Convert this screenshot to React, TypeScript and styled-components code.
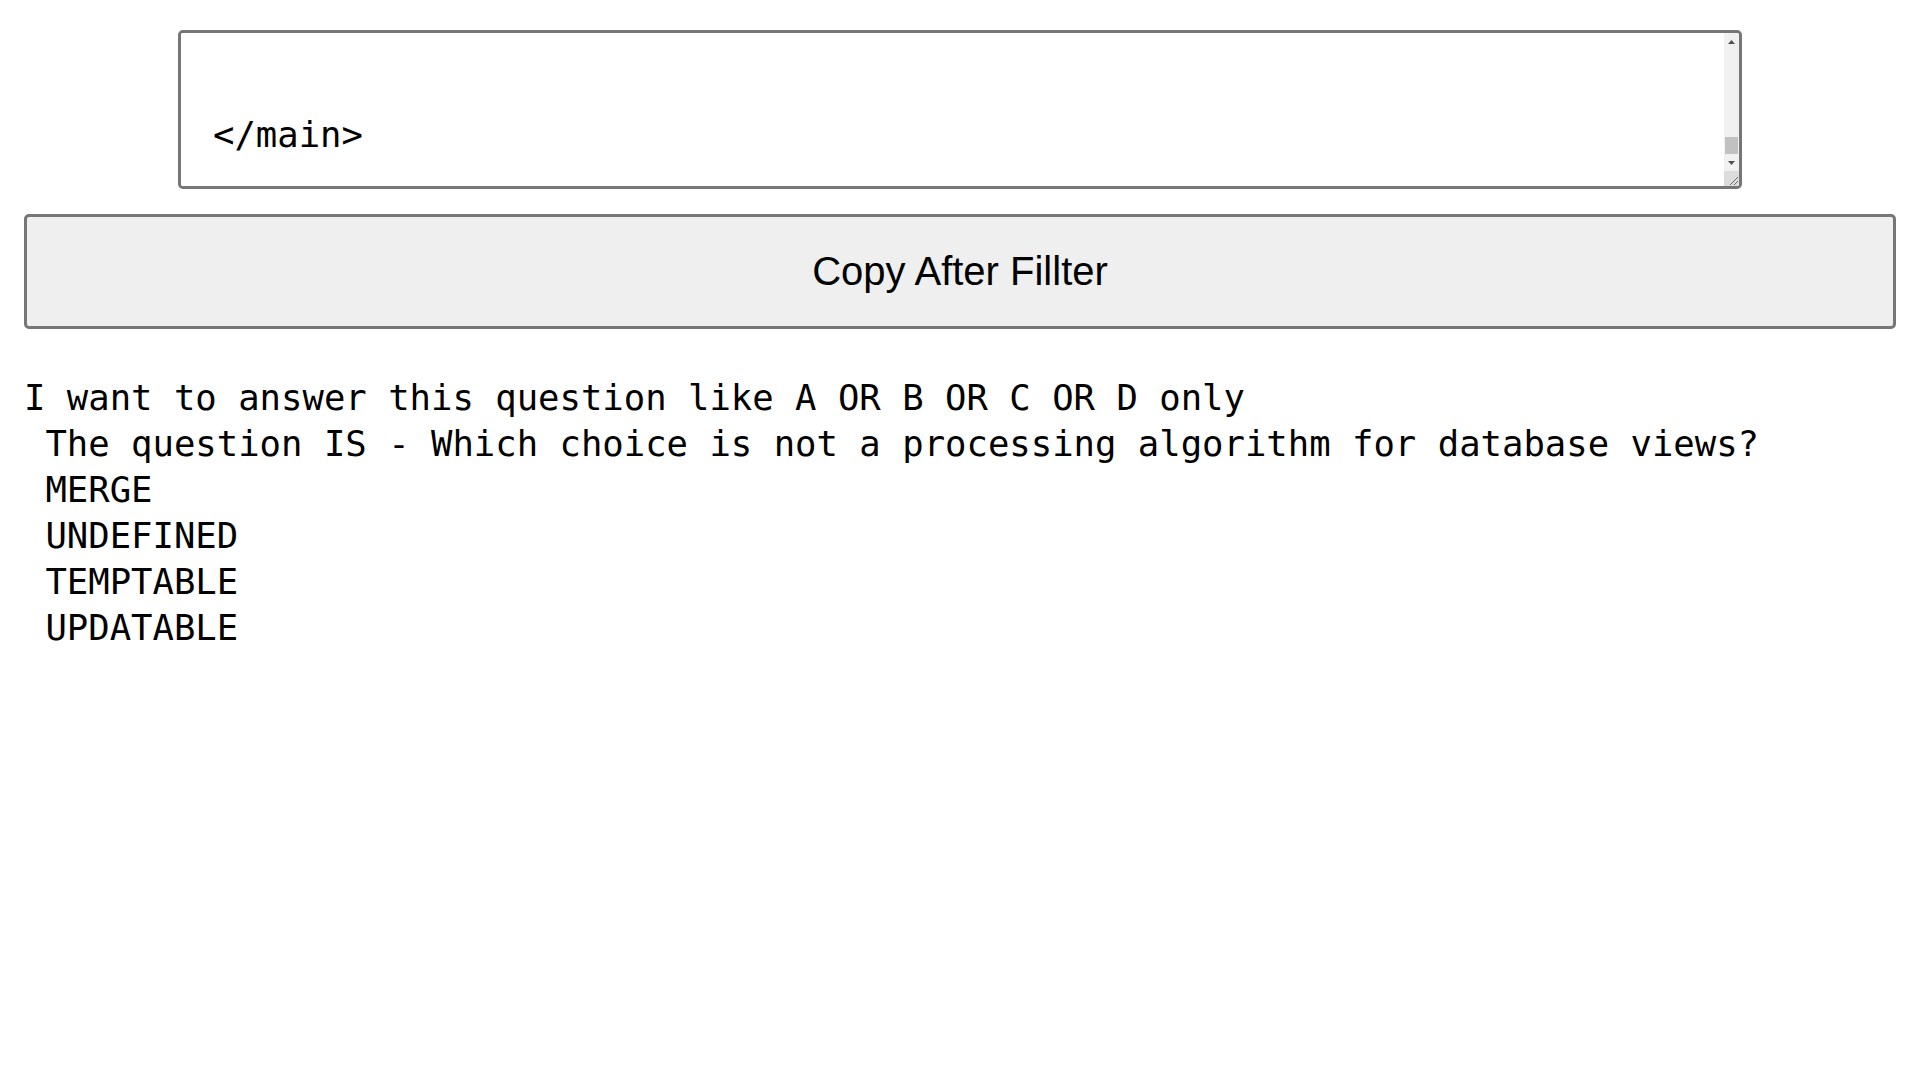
import React, { useEffect, useRef } from "react";
import styled, { createGlobalStyle } from "styled-components";

const Global = createGlobalStyle`
  html, body { margin: 0; padding: 0; background: #ffffff; }
  body { font-family: "Liberation Sans", Arial, sans-serif; }
`;

const Page = styled.div`
  display: flex;
  flex-direction: column;
  padding: 30px 24px 0 24px;
`;

const EditorFrame = styled.div`
  display: flex;
  box-sizing: border-box;
  width: 1564px;
  height: 159px;
  margin: 0 auto;
  border: 3px solid #767676;
  border-radius: 5px;
  background: #ffffff;
  overflow: hidden;
`;

const Editor = styled.textarea`
  flex: 1;
  min-width: 0;
  box-sizing: border-box;
  height: 100%;
  margin: 0;
  padding: 28px 30px 28px 32px;
  border: none;
  background: #ffffff;
  color: #000000;
  font-family: "DejaVu Sans Mono", monospace;
  font-size: 35.6px;
  line-height: 46px;
  resize: none;
  outline: none;
  overflow: hidden;
`;

const Rail = styled.div`
  display: flex;
  flex-direction: column;
  width: 15px;
  flex: 0 0 15px;
  background: #f1f1f1;
`;

const RailButton = styled.div`
  display: flex;
  align-items: center;
  justify-content: center;
  height: 17px;
  flex: 0 0 17px;
`;

const Track = styled.div`
  flex: 1;
  display: flex;
  flex-direction: column;
  justify-content: flex-end;
`;

const Thumb = styled.div`
  height: 17px;
  margin: 0 1px 0 1px;
  background: #c1c1c1;
`;

const Corner = styled.div`
  flex: 0 0 15px;
  height: 15px;
  background: #dcdcdc;
  display: flex;
  align-items: flex-end;
  justify-content: flex-end;
`;

const CopyButton = styled.button`
  display: block;
  box-sizing: border-box;
  width: 100%;
  height: 115px;
  margin-top: 25px;
  border: 3px solid #767676;
  border-radius: 5px;
  background: #efefef;
  color: #000000;
  font-family: "Liberation Sans", Arial, sans-serif;
  font-size: 40px;
  cursor: pointer;
`;

const Output = styled.div`
  margin-top: 46px;
  white-space: pre;
  font-family: "DejaVu Sans Mono", monospace;
  font-size: 35.6px;
  line-height: 46px;
  color: #000000;
`;

const source = [
  "<main>",
  "  <section class=\"question\">",
  "    <h2>Question</h2>",
  "    <p>Which choice is not a processing algorithm for database views?</p>",
  "    <ul>",
  "      <li>MERGE</li>",
  "      <li>UNDEFINED</li>",
  "      <li>TEMPTABLE</li>",
  "      <li>UPDATABLE</li>",
  "    </ul>",
  "  </section>",
  "  <section class=\"answer\">",
  "    <p></p>",
  "  </section>",
  "  <footer>",
  "  </footer>",
  "  <aside>",
  "  </aside>",
  "  <div>",
  "  </div>",
  "",
  "",
  "",
  "</main>",
].join("\n");

const lines = [
  "I want to answer this question like A OR B OR C OR D only",
  " The question IS - Which choice is not a processing algorithm for database views?",
  " MERGE",
  " UNDEFINED",
  " TEMPTABLE",
  " UPDATABLE",
];

const ArrowUp = () => (
  <svg width="7" height="4" viewBox="0 0 7 4">
    <polygon points="3.5,0 7,4 0,4" fill="#505050" />
  </svg>
);

const ArrowDown = () => (
  <svg width="7" height="4" viewBox="0 0 7 4">
    <polygon points="0,0 7,0 3.5,4" fill="#505050" />
  </svg>
);

const Grip = () => (
  <svg width="15" height="15" viewBox="0 0 15 15">
    <line x1="6" y1="14" x2="14" y2="6" stroke="#6b6b6b" strokeWidth="1" />
    <line x1="10" y1="14" x2="14" y2="10" stroke="#6b6b6b" strokeWidth="1" />
  </svg>
);

export default function App() {
  const ref = useRef<HTMLTextAreaElement>(null);
  useEffect(() => {
    if (ref.current) ref.current.scrollTop = ref.current.scrollHeight;
  }, []);
  return (
    <>
      <Global />
      <Page>
        <EditorFrame>
          <Editor ref={ref} defaultValue={source} spellCheck={false} />
          <Rail>
            <RailButton>
              <ArrowUp />
            </RailButton>
            <Track>
              <Thumb />
            </Track>
            <RailButton>
              <ArrowDown />
            </RailButton>
            <Corner>
              <Grip />
            </Corner>
          </Rail>
        </EditorFrame>
        <CopyButton type="button">Copy After Fillter</CopyButton>
        <Output>{lines.join("\n")}</Output>
      </Page>
    </>
  );
}
